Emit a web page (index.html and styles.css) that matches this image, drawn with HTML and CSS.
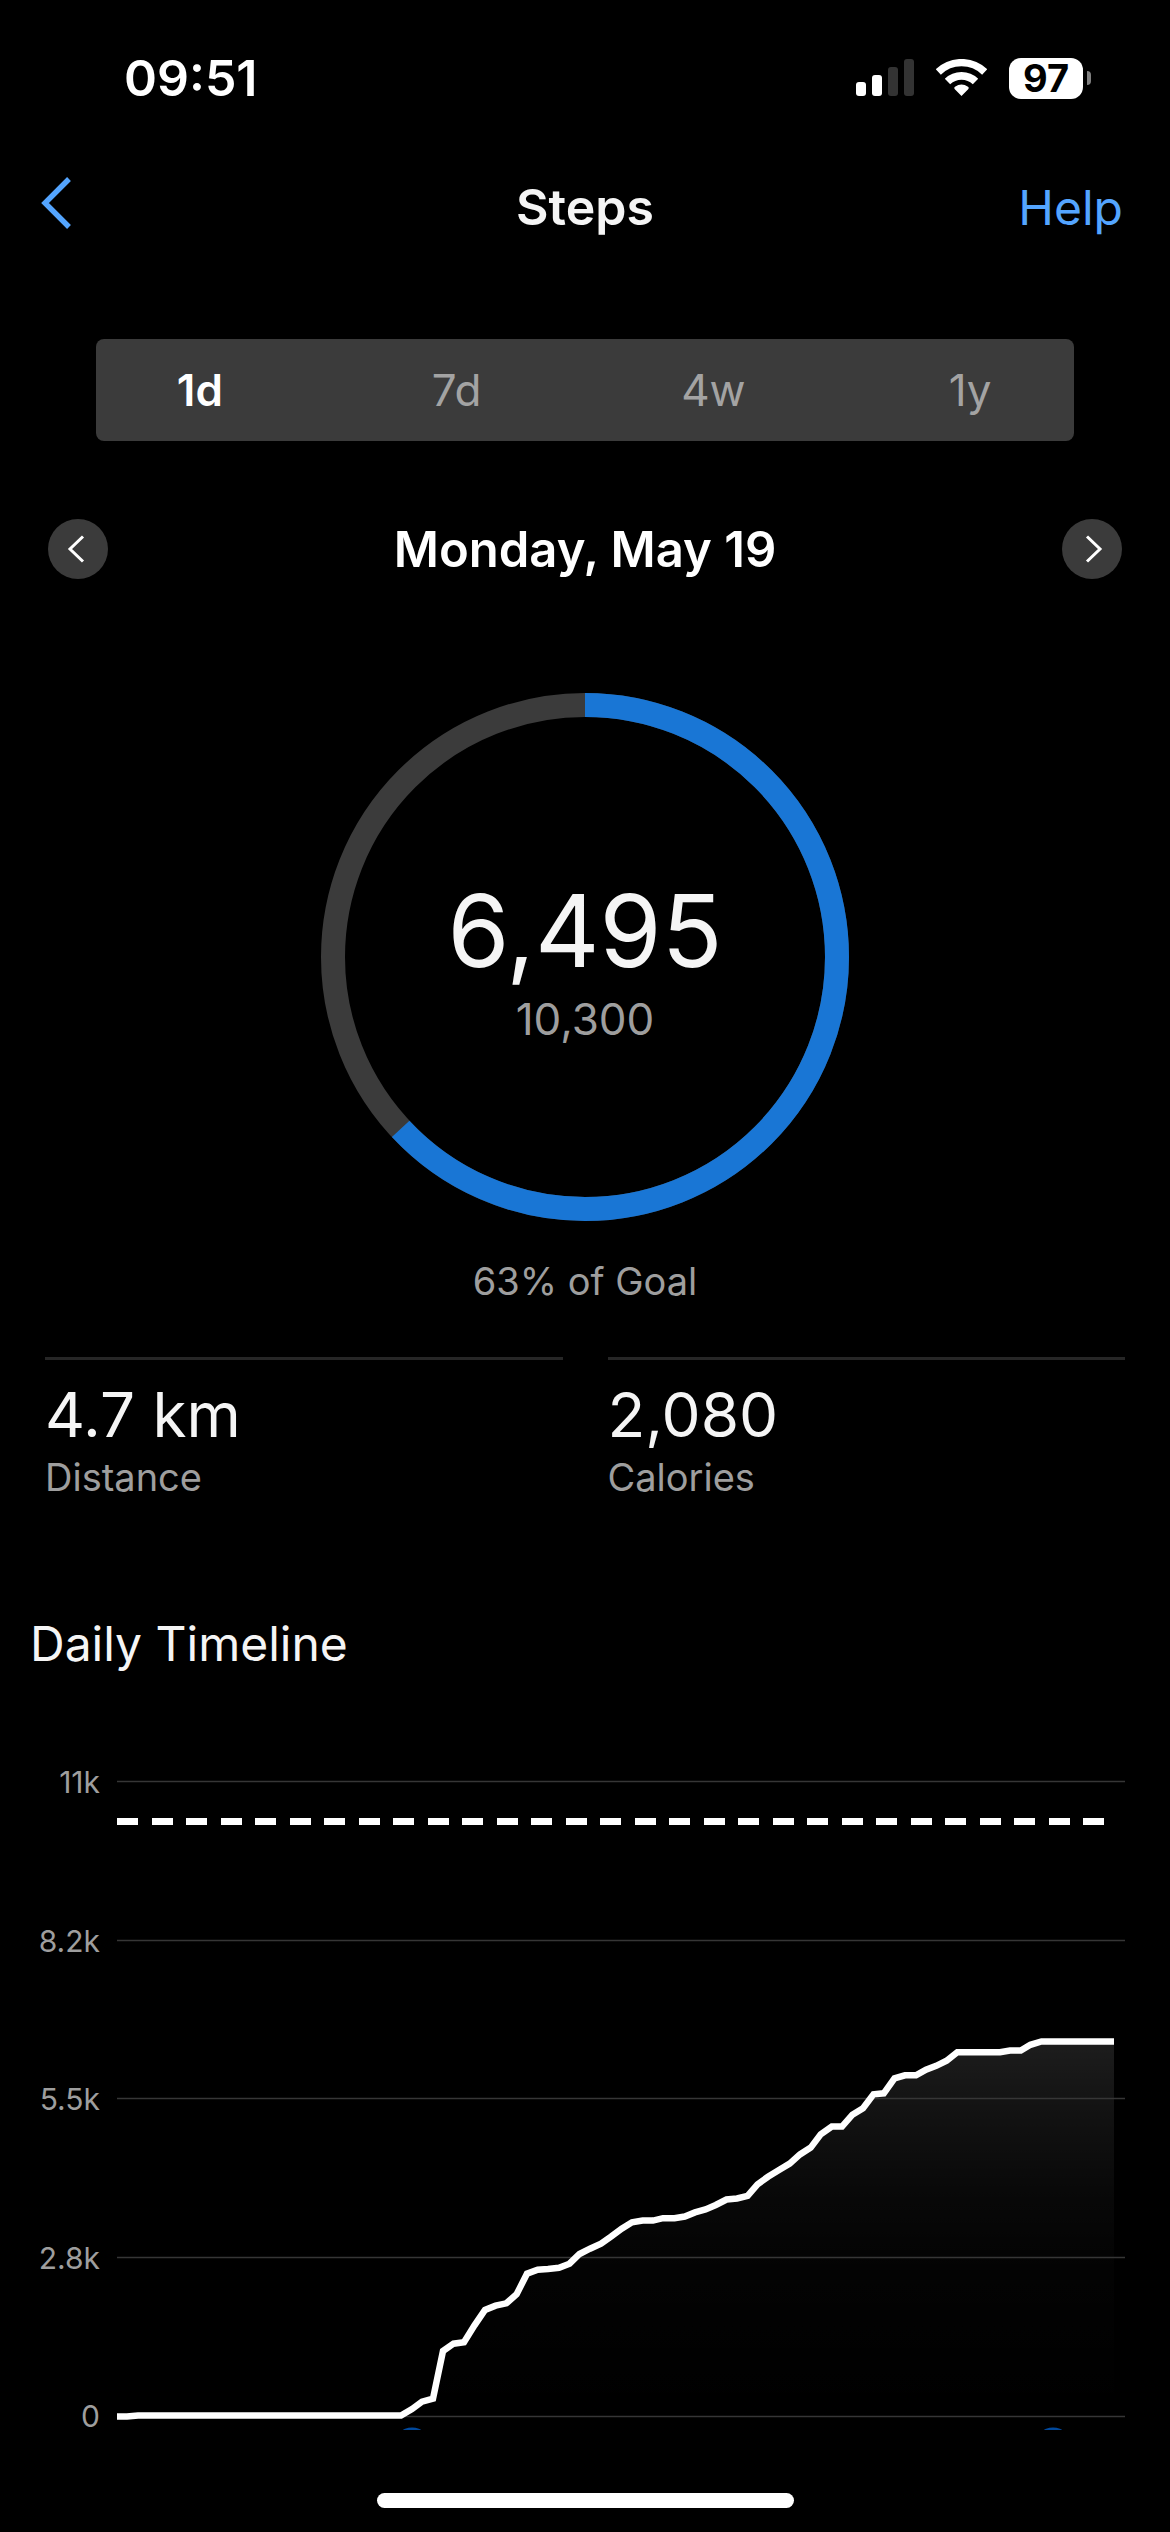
FILE: index.html
```html
<!DOCTYPE html>
<html lang="en">
<head>
  <meta charset="utf-8">
  <meta name="viewport" content="width=device-width, initial-scale=1">
  <title>Steps</title>
  <link rel="stylesheet" href="styles.css">
</head>
<body>
  <div class="status-bar">
    <time class="clock">09:51</time>
    <div class="status-icons">
      <svg class="signal" viewBox="0 0 58 38" role="img" aria-label="Signal: 2 of 4 bars">
        <rect x="0" y="23" width="10" height="14" rx="3" fill="#fff"/>
        <rect x="16" y="16" width="10" height="21" rx="3" fill="#fff"/>
        <rect x="32" y="8" width="10" height="29" rx="3" fill="#333"/>
        <rect x="48" y="0" width="10" height="37" rx="3" fill="#333"/>
      </svg>
      <svg class="wifi" viewBox="0 0 51 38" role="img" aria-label="Wi-Fi">
        <path d="M2.3 13A33.4 33.4 0 0 1 48.7 13" fill="none" stroke="#fff" stroke-width="7.4"/>
        <path d="M11.5 22.5A20.2 20.2 0 0 1 39.5 22.5" fill="none" stroke="#fff" stroke-width="7.8"/>
        <path d="M25.5 37L18.6 30Q17.6 28.6 19 27.8Q25.5 23.4 32 27.8Q33.4 28.6 32.4 30Z" fill="#fff"/>
      </svg>
      <div class="battery">
        <span class="battery-level">97</span>
        <span class="battery-tip"></span>
      </div>
    </div>
  </div>

  <header class="nav">
    <button class="back" type="button" aria-label="Back">
      <svg class="back-icon" viewBox="0 0 31 52" aria-hidden="true">
        <path d="M28 2L4 26L28 50" fill="none" stroke="currentColor" stroke-width="5.4"/>
      </svg>
    </button>
    <h1 class="title">Steps</h1>
    <a class="help" href="#">Help</a>
  </header>

  <main>
    <div class="segments" role="group" aria-label="Range">
      <button class="segment segment-active" type="button" aria-pressed="true">1d</button>
      <button class="segment" type="button" aria-pressed="false">7d</button>
      <button class="segment" type="button" aria-pressed="false">4w</button>
      <button class="segment" type="button" aria-pressed="false">1y</button>
    </div>

    <div class="date-row">
      <button class="round" type="button" aria-label="Previous day">
        <svg class="round-icon" viewBox="0 0 60 60" aria-hidden="true">
          <path d="M35 17.500L22 30L35 42.500" fill="none" stroke="#fff" stroke-width="3"/>
        </svg>
      </button>
      <h2 class="date">Monday, May 19</h2>
      <button class="round" type="button" aria-label="Next day">
        <svg class="round-icon" viewBox="0 0 60 60" aria-hidden="true">
          <path d="M25 17.500L38 30L25 42.500" fill="none" stroke="#fff" stroke-width="3"/>
        </svg>
      </button>
    </div>

    <section class="goal" aria-label="Goal progress">
      <div class="ring">
        <svg class="ring-art" viewBox="0 0 528 528" aria-hidden="true">
          <circle cx="264" cy="264" r="252" fill="none" stroke="#3b3b3b" stroke-width="24"/>
          <circle cx="264" cy="264" r="252" fill="none" stroke="#1976d5" stroke-width="24" pathLength="10300" stroke-dasharray="6495 10300" transform="rotate(-90 264 264)"/>
        </svg>
        <div class="ring-text">
          <span class="count">6,495</span>
          <span class="target">10,300</span>
        </div>
      </div>
      <p class="percent">63% of Goal</p>
    </section>

    <dl class="stats">
      <div class="stat">
        <dd class="stat-value">4.7 km</dd>
        <dt class="stat-label">Distance</dt>
      </div>
      <div class="stat">
        <dd class="stat-value">2,080</dd>
        <dt class="stat-label">Calories</dt>
      </div>
    </dl>

    <h2 class="section-title">Daily Timeline</h2>

    <div class="chart">
      <div class="axis">
        <span>11k</span>
        <span>8.2k</span>
        <span>5.5k</span>
        <span>2.8k</span>
        <span>0</span>
      </div>
      <svg class="plot" viewBox="0 0 1008 662" role="img" aria-label="Steps through the day">
        <defs>
          <linearGradient id="fill" gradientUnits="userSpaceOnUse" x1="0" y1="273" x2="0" y2="648">
            <stop offset="0" stop-color="#fff" stop-opacity="0.115"/>
            <stop offset="0.2" stop-color="#fff" stop-opacity="0.07"/>
            <stop offset="0.4" stop-color="#fff" stop-opacity="0.035"/>
            <stop offset="0.6" stop-color="#fff" stop-opacity="0.013"/>
            <stop offset="1" stop-color="#fff" stop-opacity="0"/>
          </linearGradient>
        </defs>
        <path fill="url(#fill)" d="M284 648L295 641L305 634L316 631L326 583L337 576L347 574L358 557L368 542L379 538L389 535L400 526L410 506L421 502L431 501L442 500L452 496L463 486L473 481L484 476L494 469L505 461L515 454L526 453L536 453L546 450L557 450L568 448L578 444L588 441L599 437L609 431L620 430L631 428L641 416L651 409L662 402L673 396L683 386L694 380L704 366L715 359L725 359L735 347L746 340L756 326L767 325L777 310L788 307L799 307L809 302L819 298L830 293L840 284L883 284L893 283L904 283L913 277L924 273L997 273V648Z"/>
        <g stroke="#363636" stroke-width="1.500">
          <path d="M0 13.500H1008M0 172.500H1008M0 330.500H1008M0 489.500H1008M0 648.500H1008"/>
        </g>
        <path d="M0 53.500H997" stroke="#fff" stroke-width="7" stroke-dasharray="21 14 21 13"/>
        <path fill="none" stroke="#fff" stroke-width="6.500" d="M0 648.500H10L21 647.500H284L295 641L305 633.700L316 630.700L326 583L336.500 575.700L347 574.300L357.500 557.300L368 542L378.600 537.700L389.300 535.300L399.600 526.300L410 505.700L420.700 501.700L431 501L442 499.700L452.500 495.700L462.500 486L473 480.700L484 475.600L494 468.700L504.700 460.700L515 454.300L525.700 452.600H536L546 450.200H557.500L567.800 448.500L578 444.400L588.500 441.400L598.800 437L609.500 431.500L620 430.500L630.600 427.800L640.500 416.300L651 408.800L661.600 402.300L672.700 395.600L683 386.400L693.700 379.600L703.700 366.400L714.800 358.600H725L735.400 346.700L746 340.200L756.500 326.300L766.800 325.300L777.500 310.400L788 307.300H799L809 301.600L819.200 297.800L829.600 292.700L840.300 284.300H883L893 282.600H903.800L913.400 276.800L924.500 273.400H997"/>
        <circle cx="295" cy="677.500" r="18" fill="#00489c"/>
        <circle cx="936" cy="677.500" r="18" fill="#00489c"/>
      </svg>
    </div>
  </main>

  <div class="home-bar"></div>
</body>
</html>
```

FILE: styles.css
```css
* {
  box-sizing: border-box;
}

body {
  margin: 0;
  background: #000;
  color: #f5f5f5;
  font-family: Inter, "Liberation Sans", sans-serif;
}

h1,
h2,
p,
dl,
dd {
  margin: 0;
  font-weight: 400;
}

button {
  border: 0;
  padding: 0;
  background: none;
  color: inherit;
  font: inherit;
}

svg {
  display: block;
}

.status-bar {
  display: flex;
  align-items: center;
  justify-content: space-between;
  height: 156px;
  padding: 0 79px 0 124px;
}

.clock {
  color: #fff;
  font-size: 50px;
  font-weight: 600;
}

.status-icons {
  display: flex;
  align-items: center;
  gap: 22px;
}

.signal {
  width: 58px;
  height: 38px;
}

.wifi {
  width: 51px;
  height: 38px;
}

.battery {
  display: flex;
  align-items: center;
  gap: 4px;
}

.battery-level {
  width: 74px;
  border-radius: 12px;
  background: #fff;
  color: #000;
  font-size: 38px;
  font-weight: 700;
  line-height: 41px;
  text-align: center;
}

.battery-tip {
  width: 4px;
  height: 14px;
  border-radius: 0 4px 4px 0;
  background: #808080;
}

.nav {
  display: grid;
  grid-template-columns: 1fr auto 1fr;
  align-items: center;
  height: 102px;
  padding: 0 41px;
}

.back {
  justify-self: start;
  padding-bottom: 8px;
  color: #54a5ff;
}

.back-icon {
  width: 31px;
  height: 52px;
}

.title {
  font-size: 50px;
  font-weight: 600;
}

.help {
  justify-self: end;
  padding-right: 6px;
  color: #54a5ff;
  font-size: 48px;
  text-decoration: none;
}

.segments {
  display: grid;
  grid-template-columns: repeat(4, 1fr);
  gap: 49px;
  height: 102px;
  margin: 81px 96px 0;
  border-radius: 8px;
  background: #3b3b3b;
}

.segment {
  color: #a3a3a3;
  font-size: 44px;
}

.segment-active {
  color: #fff;
  font-weight: 600;
}

.date-row {
  display: flex;
  align-items: center;
  justify-content: space-between;
  height: 60px;
  margin: 78px 48px 0;
}

.round {
  border-radius: 50%;
  background: #3b3b3b;
}

.round-icon {
  width: 60px;
  height: 60px;
}

.date {
  color: #fff;
  font-size: 49px;
  font-weight: 600;
}

.goal {
  margin-top: 114px;
  text-align: center;
}

.ring {
  display: grid;
  width: 528px;
  margin: 0 auto;
}

.ring-art,
.ring-text {
  grid-area: 1 / 1;
}

.ring-text {
  display: flex;
  flex-direction: column;
  justify-content: center;
}

.count {
  font-size: 100px;
  line-height: 124px;
}

.target {
  color: #9e9e9e;
  font-size: 44px;
  line-height: 52px;
}

.percent {
  margin-top: 36px;
  color: #9e9e9e;
  font-size: 38px;
  line-height: 48px;
}

.stats {
  display: grid;
  grid-template-columns: 1fr 1fr;
  gap: 45px;
  margin: 52px 45px 0;
}

.stat {
  padding-top: 18px;
  border-top: 3px solid #262626;
}

.stat-value {
  font-size: 62px;
  line-height: 74px;
}

.stat-label {
  color: #9e9e9e;
  font-size: 38px;
  line-height: 50px;
}

.section-title {
  margin: 112px 30px 0;
  font-size: 48px;
  line-height: 60px;
}

.chart {
  display: grid;
  grid-template-columns: 66px 1fr;
  gap: 17px;
  margin: 94px 45px 0 34px;
}

.axis {
  display: flex;
  flex-direction: column;
  justify-content: space-between;
  color: #9e9e9e;
  font-size: 30px;
  line-height: 28px;
  text-align: right;
}

.plot {
  width: 100%;
}

.home-bar {
  width: 417px;
  height: 15px;
  margin: 63px auto 24px;
  border-radius: 8px;
  background: #fff;
}
```
